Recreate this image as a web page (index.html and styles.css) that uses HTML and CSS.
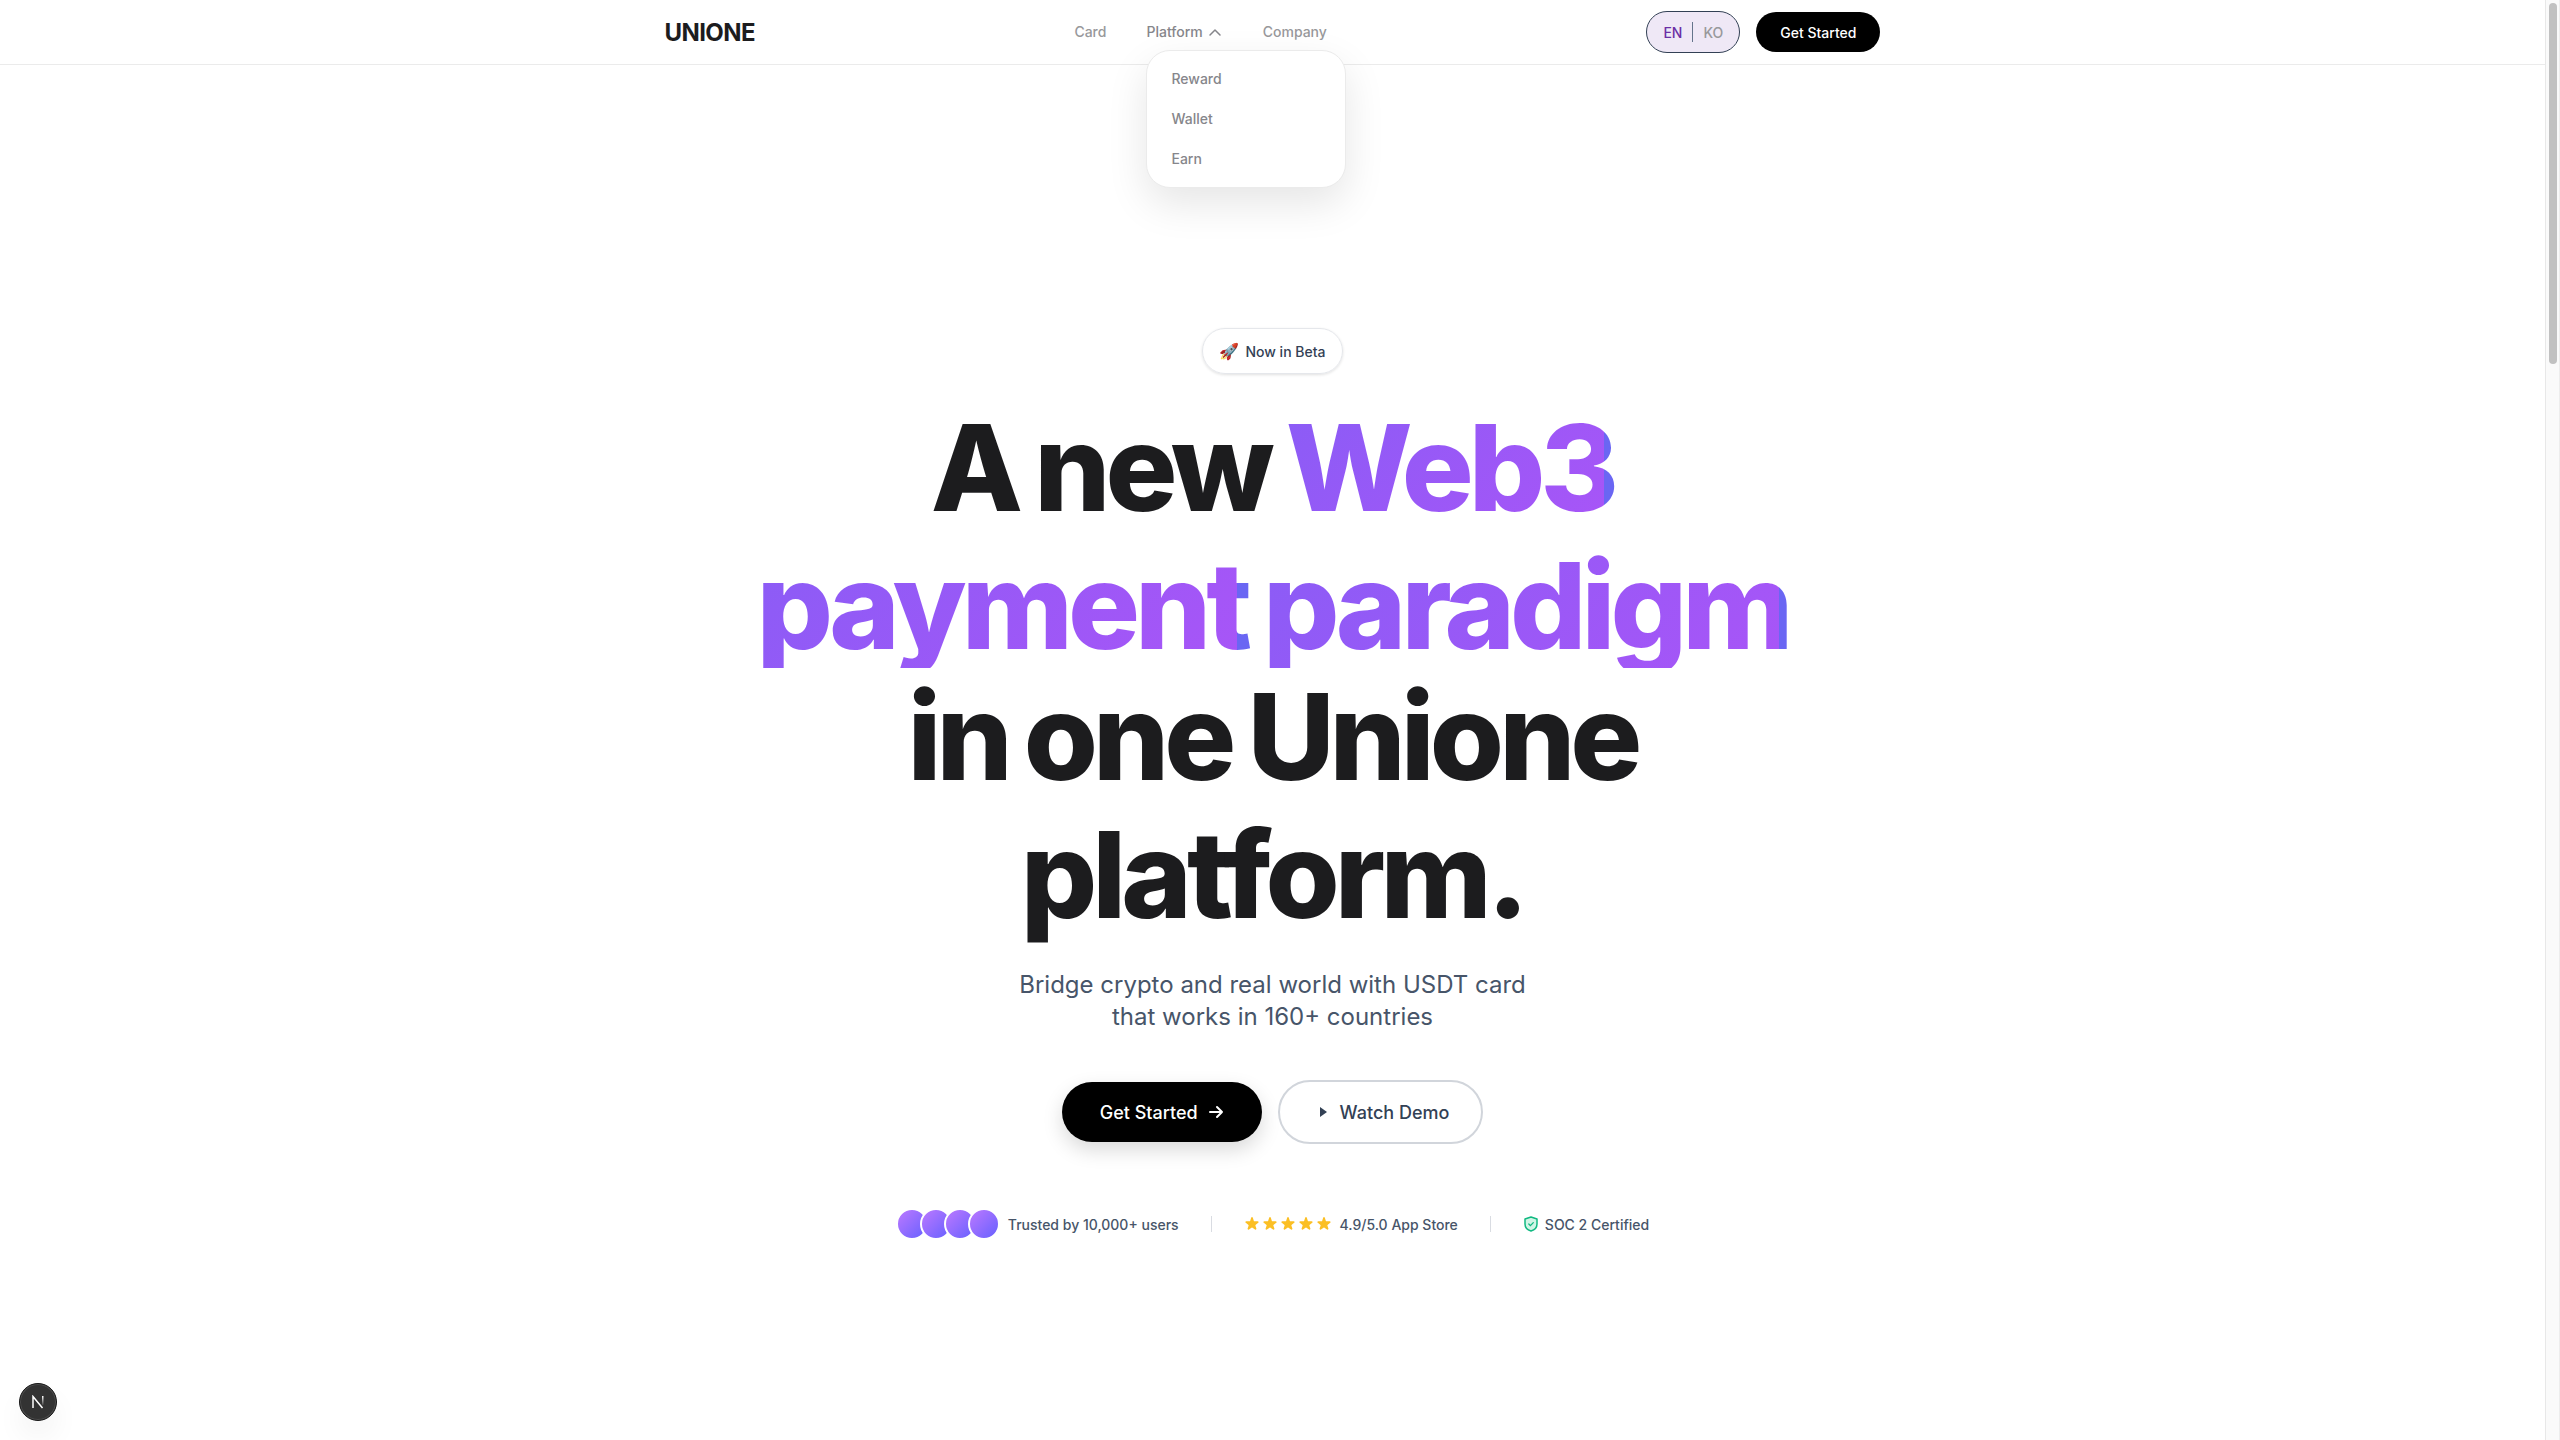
FILE: index.html
```html
<!DOCTYPE html>
<html lang="en">
<head>
<meta charset="utf-8">
<title>UNIONE</title>
<link rel="stylesheet" href="styles.css">
</head>
<body>
<header class="header">
  <div class="bar">
    <a class="logo" href="#">UNIONE</a>
    <nav class="nav">
      <a href="#">Card</a>
      <div class="menu">
        <button class="menu-toggle" type="button" aria-expanded="true">Platform
          <svg class="chevron" viewBox="0 0 16 16" aria-hidden="true"><path d="M3 11l5-5 5 5" fill="none" stroke="currentColor" stroke-width="1.5" stroke-linecap="round" stroke-linejoin="round"/></svg>
        </button>
        <div class="dropdown">
          <a href="#">Reward</a>
          <a href="#">Wallet</a>
          <a href="#">Earn</a>
        </div>
      </div>
      <a href="#">Company</a>
    </nav>
    <div class="actions">
      <button class="lang" type="button" aria-label="Language"><span class="lang-on">EN</span><span class="lang-rule"></span><span>KO</span></button>
      <button class="cta-small" type="button">Get Started</button>
    </div>
  </div>
</header>
<main class="hero">
  <div class="badge"><span class="rocket">🚀</span>Now in Beta</div>
  <h1 class="title">
    <span class="line"><span>A</span> <span>new</span> <span class="grad">Web3</span></span>
    <span class="line"><span class="grad">payment</span> <span class="grad">paradigm</span></span>
    <span class="line line-tight"><span>in</span> <span>one</span> <span>Unione</span></span>
    <span class="line"><span>platform.</span></span>
  </h1>
  <p class="lead">Bridge crypto and real world with USDT card<br>that works in 160+ countries</p>
  <div class="buttons">
    <button class="primary" type="button">Get Started
      <svg width="16" height="16" viewBox="0 0 16 16" aria-hidden="true"><path d="M2 8h12M9 3l5 5-5 5" fill="none" stroke="currentColor" stroke-width="2" stroke-linecap="round" stroke-linejoin="round"/></svg>
    </button>
    <button class="secondary" type="button">
      <svg width="20" height="20" viewBox="0 0 20 20" aria-hidden="true"><path d="M8 5l7 5-7 5z" fill="currentColor"/></svg>
      Watch Demo
    </button>
  </div>
  <div class="trust">
    <div class="trust-item users"><span class="avatars"><i></i><i></i><i></i><i></i></span>Trusted by 10,000+ users</div>
    <span class="rule"></span>
    <div class="trust-item rating"><span class="stars">
      <svg viewBox="1 1 18 18"><path d="M9.05 2.93c.3-.92 1.6-.92 1.9 0l1.07 3.29a1 1 0 00.95.69h3.46c.97 0 1.37 1.24.59 1.81l-2.8 2.03a1 1 0 00-.36 1.12l1.07 3.29c.3.92-.76 1.69-1.54 1.12l-2.8-2.03a1 1 0 00-1.18 0l-2.8 2.03c-.78.57-1.84-.2-1.54-1.12l1.07-3.29a1 1 0 00-.36-1.12L2.98 8.72c-.78-.57-.38-1.81.59-1.81h3.46a1 1 0 00.95-.69z"/></svg>
      <svg viewBox="1 1 18 18"><path d="M9.05 2.93c.3-.92 1.6-.92 1.9 0l1.07 3.29a1 1 0 00.95.69h3.46c.97 0 1.37 1.24.59 1.81l-2.8 2.03a1 1 0 00-.36 1.12l1.07 3.29c.3.92-.76 1.69-1.54 1.12l-2.8-2.03a1 1 0 00-1.18 0l-2.8 2.03c-.78.57-1.84-.2-1.54-1.12l1.07-3.29a1 1 0 00-.36-1.12L2.98 8.72c-.78-.57-.38-1.81.59-1.81h3.46a1 1 0 00.95-.69z"/></svg>
      <svg viewBox="1 1 18 18"><path d="M9.05 2.93c.3-.92 1.6-.92 1.9 0l1.07 3.29a1 1 0 00.95.69h3.46c.97 0 1.37 1.24.59 1.81l-2.8 2.03a1 1 0 00-.36 1.12l1.07 3.29c.3.92-.76 1.69-1.54 1.12l-2.8-2.03a1 1 0 00-1.18 0l-2.8 2.03c-.78.57-1.84-.2-1.54-1.12l1.07-3.29a1 1 0 00-.36-1.12L2.98 8.72c-.78-.57-.38-1.81.59-1.81h3.46a1 1 0 00.95-.69z"/></svg>
      <svg viewBox="1 1 18 18"><path d="M9.05 2.93c.3-.92 1.6-.92 1.9 0l1.07 3.29a1 1 0 00.95.69h3.46c.97 0 1.37 1.24.59 1.81l-2.8 2.03a1 1 0 00-.36 1.12l1.07 3.29c.3.92-.76 1.69-1.54 1.12l-2.8-2.03a1 1 0 00-1.18 0l-2.8 2.03c-.78.57-1.84-.2-1.54-1.12l1.07-3.29a1 1 0 00-.36-1.12L2.98 8.72c-.78-.57-.38-1.81.59-1.81h3.46a1 1 0 00.95-.69z"/></svg>
      <svg viewBox="1 1 18 18"><path d="M9.05 2.93c.3-.92 1.6-.92 1.9 0l1.07 3.29a1 1 0 00.95.69h3.46c.97 0 1.37 1.24.59 1.81l-2.8 2.03a1 1 0 00-.36 1.12l1.07 3.29c.3.92-.76 1.69-1.54 1.12l-2.8-2.03a1 1 0 00-1.18 0l-2.8 2.03c-.78.57-1.84-.2-1.54-1.12l1.07-3.29a1 1 0 00-.36-1.12L2.98 8.72c-.78-.57-.38-1.81.59-1.81h3.46a1 1 0 00.95-.69z"/></svg>
    </span>4.9/5.0 App Store</div>
    <span class="rule"></span>
    <div class="trust-item soc"><svg width="16" height="16" viewBox="0 0 16 16" aria-hidden="true"><path d="M8 1l6 2v5c0 3.500-2.500 6-6 7-3.500-1-6-3.500-6-7V3z" fill="#d0f5e6" stroke="#10b981" stroke-width="1.500" stroke-linejoin="round"/><path d="M5.800 8l1.600 1.600L10.300 6.600" fill="none" stroke="#10b981" stroke-width="1.300" stroke-linecap="round"/></svg>SOC 2 Certified</div>
  </div>
</main>
<div class="scrollbar"><div class="thumb"></div></div>
<button class="dev" type="button" aria-label="Developer tools">
  <svg width="14" height="14" viewBox="0 0 14 14" aria-hidden="true"><defs><linearGradient id="fade" x1="0" y1="0" x2="0" y2="1"><stop offset="0" stop-color="#fff"/><stop offset="1" stop-color="#fff" stop-opacity="0.100"/></linearGradient></defs><path d="M2 13V1.500l9.500 11.500" fill="none" stroke="#fff" stroke-width="1.500"/><rect x="11" y="1" width="1.500" height="9" fill="url(#fade)"/></svg>
</button>
</body>
</html>
```
FILE: styles.css
```css
* { box-sizing: border-box; }
html { overflow: hidden; }
body {
  margin: 0;
  padding-right: 15px;
  min-height: 100vh;
  background: #fff;
  font-family: Inter, "Liberation Sans", sans-serif;
  color: #1c1c1e;
}
a { color: inherit; text-decoration: none; }
button { font: inherit; border: 0; margin: 0; }
svg { flex: none; }

.header { border-bottom: 1px solid #ebebeb; }
.bar {
  max-width: 1280px;
  height: 64px;
  margin: 0 auto;
  padding: 0 32px;
  display: flex;
  justify-content: space-between;
  align-items: center;
}
.logo { font-size: 24px; font-weight: 700; letter-spacing: -0.025em; }
.nav { display: flex; align-items: center; gap: 40px; font-size: 14px; line-height: 18px; font-weight: 500; color: #98989b; }
.menu { position: relative; }
.menu-toggle { display: flex; align-items: center; gap: 4px; padding: 0; background: none; color: #86868b; }
.chevron { width: 16px; height: 16px; }
.dropdown {
  position: absolute;
  top: 27px;
  left: 0;
  width: 200px;
  padding: 8px;
  border: 1px solid #ebebeb;
  border-radius: 24px;
  background: #fff;
  box-shadow: 0 16px 40px rgba(0, 0, 0, 0.1);
  color: #86868b;
}
.dropdown a { display: block; padding: 0 16px; line-height: 40px; }
.actions { display: flex; justify-content: flex-end; align-items: center; gap: 16px; font-size: 14px; font-weight: 500; }
.lang {
  display: flex;
  align-items: center;
  gap: 10px;
  height: 42px;
  padding: 0 16px;
  border: 1px solid #334155;
  border-radius: 21px;
  background: #efe8f6;
  color: #98989b;
}
.lang-on { color: #6b2fa5; }
.lang-rule { width: 1px; height: 20px; background: #64748b; }
.cta-small { height: 40px; padding: 0 24px; border-radius: 20px; background: #000; color: #fff; }

.hero { display: flex; flex-direction: column; align-items: center; padding-top: 263px; text-align: center; }
.badge {
  display: flex;
  align-items: center;
  gap: 6px;
  height: 46px;
  padding: 0 16px;
  border: 1px solid #e5e7eb;
  border-radius: 23px;
  box-shadow: 0 1px 3px rgba(0, 0, 0, 0.12);
  font-size: 14px;
  font-weight: 500;
  color: #334155;
}
.rocket { font-size: 16px; }
.title { margin: 25px 0 0; font-size: 120px; font-weight: 800; letter-spacing: -5px; line-height: 138px; }
.line { display: flex; justify-content: center; align-items: baseline; gap: 16px; white-space: nowrap; }
.line-tight { margin-top: -7px; }
/* The last stretch of each word falls on the flat indigo behind the gradient. */
.grad {
  padding-right: 8px;
  margin: 7px -8px 7px 0;
  line-height: 124px;
  background: linear-gradient(135deg, #8b5cf6, #a855f7) left / calc(100% - 18px) 100% no-repeat #6a66f3;
  background-clip: text;
  -webkit-background-clip: text;
  color: transparent;
}
.lead { margin: 25px 0 0; font-size: 24px; line-height: 32px; color: #475569; }
.buttons { display: flex; align-items: center; gap: 16px; margin-top: 47px; font-size: 18px; font-weight: 500; }
.primary, .secondary { display: flex; align-items: center; justify-content: center; border-radius: 32px; }
.primary { gap: 10px; height: 60px; padding: 0 38px; background: #000; color: #fff; box-shadow: 0 8px 20px rgba(0, 0, 0, 0.15); }
.secondary { gap: 8px; height: 64px; padding: 0 32px; border: 2px solid #d1d5db; background: #fff; color: #334155; }
.trust { display: flex; align-items: center; gap: 32px; margin-top: 64px; font-size: 14px; font-weight: 500; color: #475569; }
.trust-item { display: flex; align-items: center; gap: 8px; }
.avatars { display: flex; }
.avatars i { width: 32px; height: 32px; margin-left: -8px; border: 2px solid #fff; border-radius: 50%; background: linear-gradient(135deg, #c27aff, #615fff) border-box; }
.avatars i:first-child { margin-left: 0; }
.rule { width: 1px; height: 16px; background: #d9dce2; }
.stars { display: flex; gap: 2px; }
.stars svg { width: 16px; height: 16px; fill: #fbbf24; }
.soc { gap: 6px; }

.scrollbar { position: fixed; top: 0; right: 0; bottom: 0; width: 15px; padding: 3px 2px 0 3px; border-left: 1px solid #e8e8e8; border-right: 1px solid #ededed; background: #fafafa; }
.thumb { width: 8px; height: 361px; border-radius: 4px; background: #c1c1c1; }
.dev { position: fixed; left: 19px; bottom: 19px; width: 38px; height: 38px; display: grid; place-items: center; padding: 0; border: 1px solid #171717; border-radius: 50%; background: #333; box-shadow: inset 0 0 0 1px #4d4d4d, 0 16px 32px -8px rgba(0, 0, 0, 0.14); }
```
